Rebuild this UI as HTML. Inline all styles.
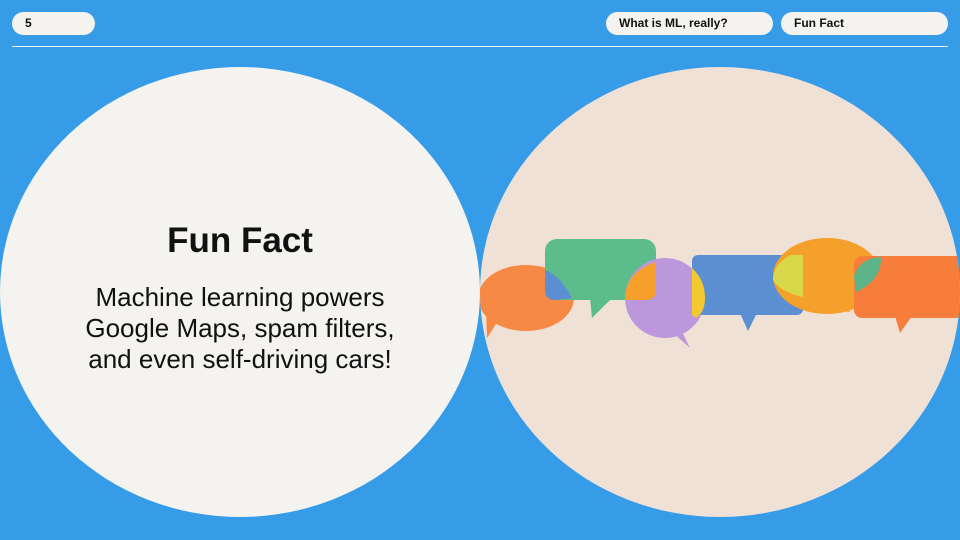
<!DOCTYPE html>
<html><head><meta charset="utf-8"><style>
body{margin:0;width:960px;height:540px;background:#369ce8;position:relative;overflow:hidden;font-family:"Liberation Sans",sans-serif}
.pill{position:absolute;top:12px;height:23px;background:#f4f3f0;border-radius:12px;font-size:12px;font-weight:bold;line-height:23px;padding-left:13px;box-sizing:border-box;color:#111}
.line{position:absolute;left:12px;top:46px;width:936px;height:1px;background:#fff}
.lc{position:absolute;left:0;top:67px;width:480px;height:450px;border-radius:50%;background:#f4f3f0;text-align:center}
h1{margin:0;position:absolute;top:154px;width:100%;font-size:35px;font-weight:bold;color:#111}
p{margin:0;position:absolute;top:215px;width:100%;font-size:26px;line-height:31px;color:#111}
svg{position:absolute;left:480px;top:67px}
</style></head><body>
<div class="pill" style="left:12px;width:83px">5</div>
<div class="pill" style="left:606px;width:167px">What is ML, really?</div>
<div class="pill" style="left:781px;width:167px">Fun Fact</div>
<div class="line"></div>
<div class="lc"><h1>Fun Fact</h1><p>Machine learning powers<br>Google Maps, spam filters,<br>and even self-driving cars!</p></div>
<svg width="480" height="450" viewBox="480 67 480 450">
<defs><clipPath id="c"><ellipse cx="720" cy="292" rx="240" ry="225"/></clipPath></defs>
<g clip-path="url(#c)">
<rect x="480" y="67" width="480" height="450" fill="#efe1d6"/>
<ellipse cx="526" cy="298" rx="48" ry="33" fill="#f68a45"/>
<path d="M486 310 L487 338 L500 318Z" fill="#f68a45"/>
<rect x="545" y="239" width="111" height="61" rx="12" fill="#5cbc8b"/>
<path d="M590 298 L592 318 L612 298Z" fill="#5cbc8b"/>
<path d="M545 270 Q560 275 572 298 L555 300 Q545 300 545 290Z" fill="#5b8fd2"/>
<ellipse cx="665" cy="298" rx="40" ry="40" fill="#bd97db"/>
<path d="M670 330 L690 348 L680 328Z" fill="#bd97db"/>
<path d="M656 262 L656 290 Q656 300 646 300 L625 300 Q625 272 656 262Z" fill="#f4a02a"/>
<rect x="692" y="255" width="111" height="60" rx="6" fill="#5b8fd2"/>
<path d="M740 313 L748 331 L757 313Z" fill="#5b8fd2"/>
<path d="M692 268 Q705 280 705 298 Q705 312 696 318 L692 315Z" fill="#f4c92f"/>
<ellipse cx="827" cy="276" rx="54" ry="38" fill="#f4a02a"/>
<path d="M836 310 L850 312 L842 300Z" fill="#f4a02a"/>
<path d="M803 255 L790 255 Q773 265 773 280 Q780 292 803 297Z" fill="#d9d84a"/>
<rect x="854" y="256" width="110" height="62" rx="8" fill="#f67e3a"/>
<path d="M895 316 L900 333 L912 316Z" fill="#f67e3a"/>
<path d="M854 276 Q860 258 881 257 Q882 280 856 292Z" fill="#5cb488"/>
</g></svg>
</body></html>
